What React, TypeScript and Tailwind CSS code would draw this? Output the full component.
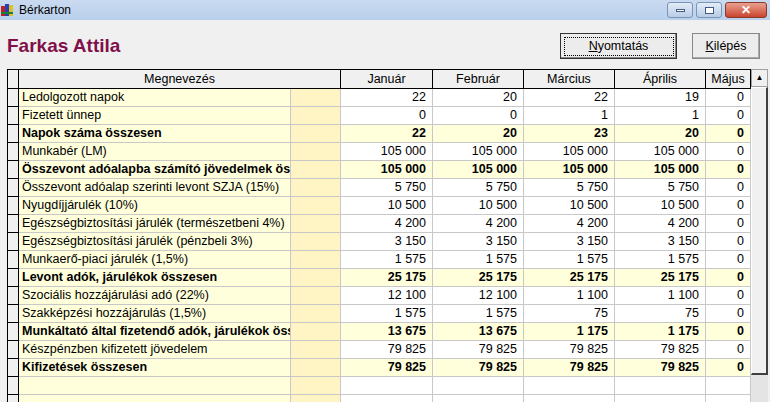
const rows: [string, boolean, string[]][] = [
  ["Ledolgozott napok", false, ["22", "20", "22", "19", "0"]],
  ["Fizetett ünnep", false, ["0", "0", "1", "1", "0"]],
  ["Napok száma összesen", true, ["22", "20", "23", "20", "0"]],
  ["Munkabér (LM)", false, ["105 000", "105 000", "105 000", "105 000", "0"]],
  ["Összevont adóalapba számító jövedelmek összesen", true, ["105 000", "105 000", "105 000", "105 000", "0"]],
  ["Összevont adóalap szerinti levont SZJA (15%)", false, ["5 750", "5 750", "5 750", "5 750", "0"]],
  ["Nyugdíjjárulék (10%)", false, ["10 500", "10 500", "10 500", "10 500", "0"]],
  ["Egészségbiztosítási járulék (természetbeni 4%)", false, ["4 200", "4 200", "4 200", "4 200", "0"]],
  ["Egészségbiztosítási járulék (pénzbeli 3%)", false, ["3 150", "3 150", "3 150", "3 150", "0"]],
  ["Munkaerő-piaci járulék (1,5%)", false, ["1 575", "1 575", "1 575", "1 575", "0"]],
  ["Levont adók, járulékok összesen", true, ["25 175", "25 175", "25 175", "25 175", "0"]],
  ["Szociális hozzájárulási adó (22%)", false, ["12 100", "12 100", "1 100", "1 100", "0"]],
  ["Szakképzési hozzájárulás (1,5%)", false, ["1 575", "1 575", "75", "75", "0"]],
  ["Munkáltató által fizetendő adók, járulékok összesen", true, ["13 675", "13 675", "1 175", "1 175", "0"]],
  ["Készpénzben kifizetett jövedelem", false, ["79 825", "79 825", "79 825", "79 825", "0"]],
  ["Kifizetések összesen", true, ["79 825", "79 825", "79 825", "79 825", "0"]],
  ["", false, ["", "", "", "", ""]],
  ["", false, ["", "", "", "", ""]],
];

const months = ["Január", "Február", "Március", "Április", "Május"];
const widths = ["w-[92px]", "w-[91px]", "w-[91px]", "w-[91px]", "w-[45px]"];

export default function App() {
  return (
    <div className="w-[770px] h-[402px] overflow-hidden bg-[#f0f0f0] text-[12.5px] text-black" style={{ fontFamily: "Tahoma, 'Liberation Sans', Arial, sans-serif" }}>
      <div className="h-[20px] flex items-center justify-between bg-gradient-to-b from-[#c9daf0] to-[#b9d0ec]">
        <div className="flex items-center gap-1 pl-[1px]">
          <svg width="14" height="14" viewBox="0 0 14 14">
            <rect x="0" y="3" width="4" height="10" fill="#c02020" />
            <rect x="4" y="1" width="4" height="12" fill="#2040c0" />
            <rect x="8" y="2" width="4" height="11" fill="#e0c020" />
            <rect x="0" y="9" width="12" height="2" fill="#208030" />
          </svg>
          <span className="text-[12px]">Bérkarton</span>
        </div>
        <div className="flex gap-[3px] pr-[3px]">
          <div className="w-[26px] h-[16px] rounded-[3px] border border-[#7c93b8] bg-gradient-to-b from-[#e4edf8] to-[#b8cce6] flex items-center justify-center"><div className="w-[9px] h-[3px] border border-[#425a82] bg-white" /></div>
          <div className="w-[26px] h-[16px] rounded-[3px] border border-[#7c93b8] bg-gradient-to-b from-[#e4edf8] to-[#b8cce6] flex items-center justify-center"><div className="w-[9px] h-[7px] border border-[#425a82] bg-white" /></div>
          <div className="w-[42px] h-[16px] rounded-[3px] border border-[#8a3a2a] bg-gradient-to-b from-[#e8a090] to-[#c8432c] flex items-center justify-center text-white font-bold text-[12px]">✕</div>
        </div>
      </div>
      <div className="h-[49px] flex items-start justify-between pl-[7px] pr-[10px]">
        <div className="mt-[12px] text-[19px] font-bold text-[#80104a]" style={{ fontFamily: "'Liberation Sans', Arial, sans-serif" }}>Farkas Attila</div>
        <div className="flex gap-[15px] mt-[13px]">
          <div className="w-[117px] h-[26px] border border-[#333] bg-[#ececec] shadow-[inset_-1px_-1px_0_#888] flex items-center justify-center">
            <div className="w-[110px] h-[19px] border border-dotted border-black flex items-center justify-center"><span><u>N</u>yomtatás</span></div>
          </div>
          <div className="w-[68px] h-[26px] border border-[#888] bg-[#ececec] shadow-[inset_-1px_-1px_0_#aaa] flex items-center justify-center"><span><u>K</u>ilépés</span></div>
        </div>
      </div>
      <div className="flex ml-[7px]">
        <div className="border-l border-t border-black">
          <div className="flex h-[19px] border-b border-black bg-[#f0f0f0]">
            <div className="w-[11px] border-r border-black" />
            <div className="w-[322px] border-r border-black text-center leading-[18px]">Megnevezés</div>
            {months.map((m, i) => (
              <div key={m} className={`${widths[i]} border-r border-black text-center leading-[18px]`}>{m}</div>
            ))}
          </div>
          {rows.map(([label, bold, vals], r) => (
            <div key={r} className={`flex h-[18px] border-b border-[#c8c8c8] ${bold ? "font-bold" : ""}`}>
              <div className="w-[11px] border-r border-black bg-[#f0f0f0] border-b border-b-black -mb-[1px]" />
              <div className="w-[272px] border-r border-[#c8c8c8] bg-[#ffffdc] pl-[3px] leading-[17px] whitespace-nowrap overflow-hidden">{label}</div>
              <div className="w-[50px] border-r border-[#c8c8c8] bg-[#fff5c4]" />
              {vals.map((v, i) => (
                <div key={i} className={`${widths[i]} border-r border-[#c8c8c8] text-right pr-[6px] leading-[17px] ${bold ? "bg-[#ffffdc]" : "bg-white"}`}>{v}</div>
              ))}
            </div>
          ))}
        </div>
        <div className="w-[17px] flex flex-col">
          <div className="h-[18px] border border-[#a0a0a0] bg-[#f0f0f0] flex items-center justify-center text-[8px]">▲</div>
          <div className="h-[288px] bg-[#f0f0f0] border-r-2 border-b-2 border-[#404040] border-l border-t border-l-white border-t-white" />
          <div className="flex-1 bg-[#e4e4e4]" />
        </div>
      </div>
    </div>
  );
}
